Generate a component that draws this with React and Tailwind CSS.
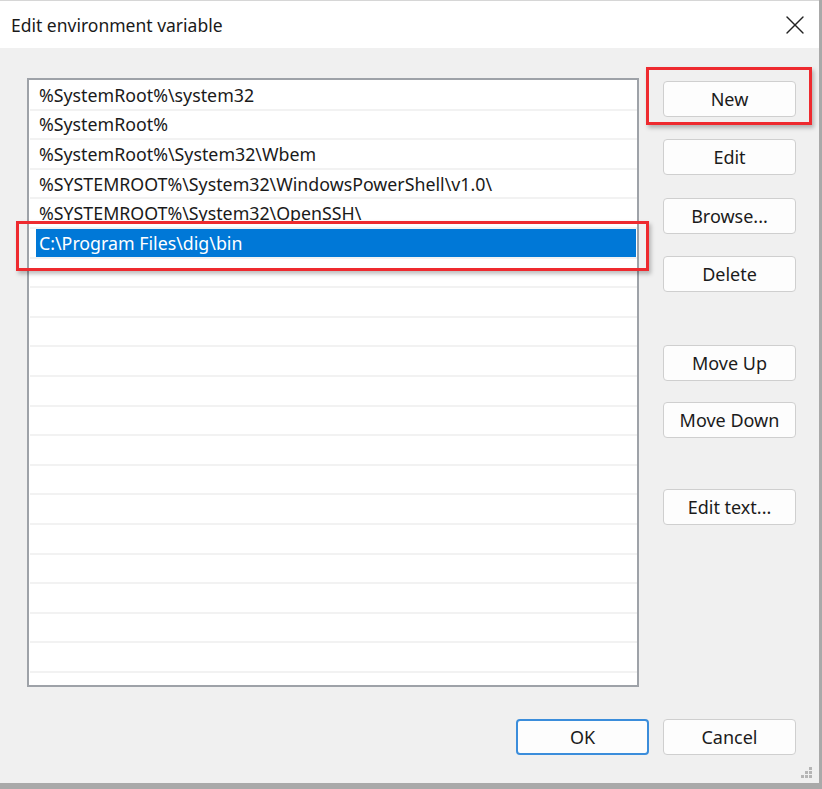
import { X } from 'lucide-react';

const paths = [
  '%SystemRoot%\\system32',
  '%SystemRoot%',
  '%SystemRoot%\\System32\\Wbem',
  '%SYSTEMROOT%\\System32\\WindowsPowerShell\\v1.0\\',
  '%SYSTEMROOT%\\System32\\OpenSSH\\',
  'C:\\Program Files\\dig\\bin',
];

const ROWS = 21;

function DialogButton({ children, primary, className = '' }) {
  return (
    <button
      className={`flex h-[36px] w-[133px] items-center justify-center rounded-[4px] bg-[#fdfdfd] text-[18px] text-[#1b1b1b] ${
        primary ? 'border-2 border-[#3b8ddb]' : 'border border-[#cfcfcf]'
      } ${className}`}
    >
      {children}
    </button>
  );
}

function Grip() {
  const dots = [
    [8, 0],
    [4, 4],
    [8, 4],
    [0, 8],
    [4, 8],
    [8, 8],
  ];
  return (
    <svg width="12" height="12" viewBox="0 0 12 12" className="absolute bottom-[4px] right-[6px]">
      {dots.map(([x, y]) => (
        <rect key={`${x}-${y}`} x={x} y={y} width="3" height="3" fill="#b5b5b5" />
      ))}
    </svg>
  );
}

export default function App() {
  const selected = 5;

  return (
    <div
      className="h-[789px] w-[822px] overflow-hidden bg-[#a9a9a9]"
      style={{ fontFamily: '"Noto Sans", "Open Sans", sans-serif' }}
    >
      <div className="relative flex h-[783px] w-[819px] flex-col border-t border-[#d6d6d6] bg-[#f0f0f0]">
        {/* title bar */}
        <div className="flex h-[47px] items-center justify-between bg-white pl-[11px] pr-[8px]">
          <span className="pt-[1px] text-[17.5px] text-[#1a1a1a]">Edit environment variable</span>
          <X size={32} strokeWidth={1} color="#222" />
        </div>

        {/* body */}
        <div className="flex gap-[24px] pl-[27px] pt-[30px]">
          <div className="relative h-[609px] w-[612px] overflow-hidden border-2 border-[#9ea2a8] bg-white pl-[1px] pt-[1px]">
            {Array.from({ length: ROWS }).map((_, i) => (
              <div
                key={i}
                className="h-[29.6px] border-b-2 border-[#f2f2f2] pr-[1px]"
              >
                <div
                  className={`ml-[6px] flex h-full items-center pl-[3px] pt-[2px] text-[17.8px] leading-none ${
                    i === selected ? 'bg-[#0078d7] text-white' : 'text-[#1a1a1a]'
                  }`}
                >
                  {paths[i] ?? ''}
                </div>
              </div>
            ))}
          </div>

          <div className="flex flex-col pt-[3px]">
            <DialogButton>New</DialogButton>
            <DialogButton className="mt-[22px]">Edit</DialogButton>
            <DialogButton className="mt-[23px]">Browse...</DialogButton>
            <DialogButton className="mt-[22px]">Delete</DialogButton>
            <DialogButton className="mt-[53px]">Move Up</DialogButton>
            <DialogButton className="mt-[21px]">Move Down</DialogButton>
            <DialogButton className="mt-[51px]">Edit text...</DialogButton>
          </div>
        </div>

        {/* footer */}
        <div className="flex justify-end gap-[14px] pr-[23px] pt-[32px]">
          <DialogButton primary>OK</DialogButton>
          <DialogButton>Cancel</DialogButton>
        </div>

        <Grip />

        {/* annotation boxes */}
        <div className="pointer-events-none absolute left-[646px] top-[66px] h-[58px] w-[166px] border-[3px] border-[#ee2a2f] shadow-[2px_3px_4px_rgba(0,0,0,0.25)]" />
        <div className="pointer-events-none absolute left-[16px] top-[220px] h-[50px] w-[633px] border-[3px] border-[#ee2a2f] shadow-[2px_3px_4px_rgba(0,0,0,0.25)]" />
      </div>
    </div>
  );
}
